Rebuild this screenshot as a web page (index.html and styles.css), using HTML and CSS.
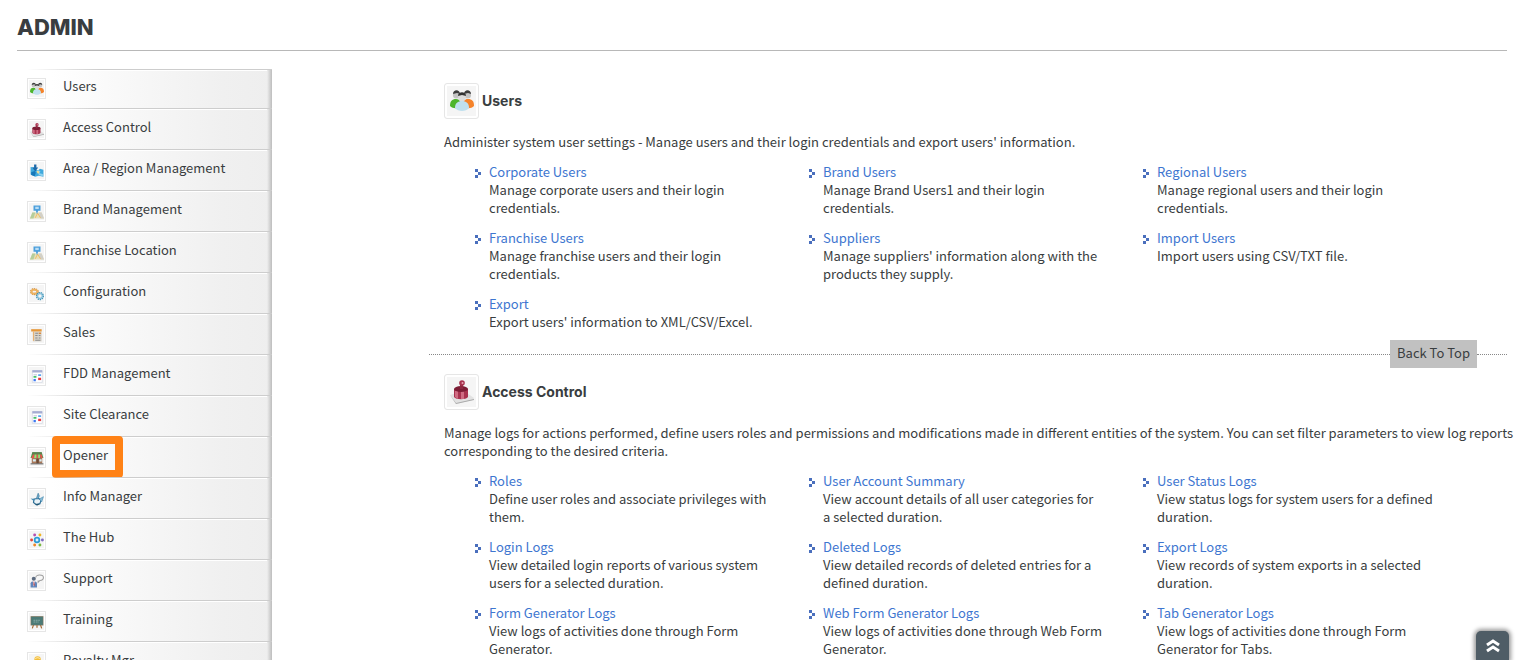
FILE: index.html
```html
<!DOCTYPE html>
<html lang="en">
<head>
    <meta charset="UTF-8">
    <meta name="viewport" content="width=device-width, initial-scale=1.0">
    <title>Admin</title>
    <link rel="stylesheet" href="styles.css">
</head>
<body>

    <!-- icon set -->
    <svg class="sprite" aria-hidden="true">
        <symbol id="i-users" viewBox="0 0 24 24">
            <path d="M0 17c0-5 2-7 6-7s5 3 5 7c-3 3-8 3-11 0z" fill="#4db52c"/>
            <path d="M13 17c0-5 1-7 5-7s6 2 6 7c-3 3-8 3-11 0z" fill="#f5832a"/>
            <circle cx="6.500" cy="6" r="3.600" fill="#c4c4c4"/>
            <path d="M3 5c0-5 7-5 7 0L7 4z" fill="#3d3d3d"/>
            <circle cx="17.500" cy="6" r="3.600" fill="#c4c4c4"/>
            <path d="M14 5c0-5 7-5 7 0l-3-1z" fill="#3d3d3d"/>
            <path d="M5 19c0-5 3-7 7-7s7 2 7 7c-3 4-11 4-14 0z" fill="#bfe0ee"/>
            <circle cx="12" cy="8.500" r="3.800" fill="#dcdcdc"/>
            <path d="M8 7c0-5 8-5 8 0l-4-1z" fill="#333"/>
        </symbol>
        <symbol id="i-access" viewBox="0 0 24 24">
            <path d="M0 15l14-4 10 7-1 2-17 4z" fill="#e2e2e2"/>
            <path d="M0 15l6 8 18-4v1L6 24z" fill="#aaa"/>
            <path d="M4 9v8c2 3 12 3 14 0V9z" fill="#a8334f"/>
            <path d="M5 11v6l3 2v-9zM11 11h3v8h-3z" fill="#cf6b82"/>
            <ellipse cx="11" cy="9" rx="7" ry="3" fill="#7c1d35"/>
            <path d="M10 9V4h3v5z" fill="#8d2840"/>
            <circle cx="12" cy="3" r="2.800" fill="#a8334f"/>
            <circle cx="12.500" cy="3" r="1" fill="#e7a6b4"/>
        </symbol>
        <symbol id="i-area" viewBox="0 0 24 24">
            <path d="M1 5l7 1 2 4 4 1 3-3 6 2v12l-8-2-6 2-8-4z" fill="#3fa9dd"/>
            <path d="M2 14l6-2 2 3-2 6-6-2z" fill="#1878b8"/>
            <path d="M14 11l4 1-2 4 6 1v4l-7-2z" fill="#8fd2ee"/>
            <path d="M11 13l3-2 2 3-2 3z" fill="#f3dd93"/>
            <path d="M7 1h4v5h3l-5 7-5-7h3z" fill="#1b68a8"/>
        </symbol>
        <symbol id="i-map" viewBox="0 0 24 24">
            <path d="M4 13h16l4 10H0z" fill="#e8dfb8"/>
            <path d="M4 13h5l-3 10H0z" fill="#b5cd9b"/>
            <path d="M15 13h5l4 10h-6z" fill="#d2d0c8"/>
            <path d="M9 22l4-8 5 8" fill="none" stroke="#f0b95a" stroke-width="1.500"/>
            <path d="M6 1h12v9h-4l-2 6-2-6H6z" fill="#4c9fdc"/>
            <path d="M9 3h6v4H9z" fill="#b9ddf5"/>
        </symbol>
        <symbol id="i-config" viewBox="0 0 24 24">
            <ellipse cx="7.500" cy="8" rx="5.500" ry="4" fill="none" stroke="#c98330" stroke-width="4" stroke-dasharray="2 1"/>
            <ellipse cx="7.500" cy="8" rx="5" ry="3.500" fill="none" stroke="#eeb25e" stroke-width="3"/>
            <ellipse cx="17" cy="15.500" rx="5" ry="5" fill="none" stroke="#3f94b8" stroke-width="4" stroke-dasharray="2 1"/>
            <circle cx="17" cy="15.500" r="4" fill="#f4f4f4" stroke="#8cc4dd" stroke-width="2"/>
        </symbol>
        <symbol id="i-sales" viewBox="0 0 24 24">
            <path d="M5 6h15v17H5z" fill="#d9d4ca"/>
            <path d="M2 2h18v4H2z" fill="#e6983a"/>
            <path d="M5 6h2v16H5z" fill="#e6b173"/>
            <path d="M9 9h5M9 13h4M15 13h3M9 17h4M15 17h3M9 21h9" stroke="#8b8b8b" stroke-width="1.800"/>
            <path d="M15 9h4" stroke="#d97b25" stroke-width="2"/>
        </symbol>
        <symbol id="i-form" viewBox="0 0 24 24">
            <path d="M4 3h17v20H4z" fill="#fff" stroke="#c9cede" stroke-width="1"/>
            <path d="M4 2h17v4H4z" fill="#a5acd2"/>
            <path d="M6 9h6v2H6z" fill="#c3c9dd"/>
            <path d="M6 12h5v3H6z" fill="#43c36a"/>
            <path d="M14 9h5v3h-5z" fill="#58a6f0"/>
            <path d="M6 17h4v4H6z" fill="#3c78f0"/>
            <path d="M14 15h5v4h-5z" fill="#e8353a"/>
        </symbol>
        <symbol id="i-store" viewBox="0 0 24 24">
            <path d="M3 12h18v10H3z" fill="#a9785a"/>
            <path d="M5 14h5v4H5zM16 14h4v4h-4z" fill="#d8ecf2"/>
            <path d="M11 13h4v9h-4z" fill="#6c4a35"/>
            <path d="M4 2h16l3 10H1z" fill="#3fa34c"/>
            <path d="M4 2h16l1 4H3z" fill="#5e7f4e"/>
            <path d="M5 6h3l-1 6H2zM11 6h3v6h-3zM17 6h3l2 6h-4z" fill="#e8524e"/>
            <path d="M8 6h3v6H7zM14 6h3v6h-3z" fill="#9cdb75"/>
            <path d="M1 21h22v2H1z" fill="#777"/>
        </symbol>
        <symbol id="i-info" viewBox="0 0 24 24">
            <path d="M7 12l8-1 4 3-2 6-6 2-5-4z" fill="#eaf3f8" stroke="#2f6f96" stroke-width="2"/>
            <path d="M11 11l3-9 2 5-2 4" fill="#6faccc" stroke="#2f6f96"/>
            <path d="M1 11l7 1-1 4z" fill="#3f88b2"/>
            <path d="M16 12l7-4-3 9z" fill="#8bbcd4" stroke="#3f88b2"/>
            <path d="M8 20h9l-4 3z" fill="#22546f"/>
        </symbol>
        <symbol id="i-hub" viewBox="0 0 24 24">
            <circle cx="12" cy="12" r="4" fill="#d9f0fb" stroke="#2d9bd6" stroke-width="3"/>
            <circle cx="8" cy="3.500" r="2.500" fill="#b550b0"/>
            <circle cx="17" cy="3.500" r="2.500" fill="#f0b323"/>
            <circle cx="2.700" cy="12" r="2.500" fill="#e0473e"/>
            <circle cx="21.300" cy="12" r="2.500" fill="#7d68c0"/>
            <circle cx="8" cy="20.500" r="2.500" fill="#f08626"/>
            <circle cx="17" cy="20.500" r="2.500" fill="#79b843"/>
        </symbol>
        <symbol id="i-support" viewBox="0 0 24 24">
            <path d="M10 6c0-6 13-5 13 0 0 4-3 5-6 5l-3 3v-3" fill="#f7f7f7" stroke="#9d9d9d" stroke-width="1.800"/>
            <circle cx="6.500" cy="8" r="3.500" fill="#5c6b80"/>
            <path d="M1 23v-7c0-5 11-5 11 0v7z" fill="#6186bb"/>
            <path d="M5 12h3l-1 9H6z" fill="#fff"/>
            <path d="M6 13h1l1 6-1 2-1-2z" fill="#c23838"/>
        </symbol>
        <symbol id="i-board" viewBox="0 0 24 24">
            <path d="M6 17l-2 6M18 17l2 6M12 17v5" stroke="#a5672f" stroke-width="2"/>
            <path d="M1 2h22v16H1z" fill="#8a7a62"/>
            <path d="M2 3h20v14H2z" fill="#4b7a76"/>
            <path d="M6 9h12M6 12h9" stroke="#9dbdb9" stroke-width="1.200" stroke-dasharray="3 1"/>
        </symbol>
        <symbol id="i-royalty" viewBox="0 0 24 24">
            <circle cx="13" cy="6" r="5.500" fill="#f4bd36"/>
            <path d="M9 5c2-3 6-3 8 0" fill="none" stroke="#fbe29a" stroke-width="2"/>
            <path d="M1 14l8-3 13 3-4 7H4z" fill="#e9a52c"/>
        </symbol>
    </svg>

    <div class="page" id="top">
        <h1>ADMIN</h1>

        <div class="columns">
            <ul class="side-menu">
                <li><a href="#users"><span class="icon"><svg><use href="#i-users"/></svg></span>Users</a></li>
                <li><a href="#access"><span class="icon"><svg><use href="#i-access"/></svg></span>Access Control</a></li>
                <li><a href="#"><span class="icon"><svg><use href="#i-area"/></svg></span>Area / Region Management</a></li>
                <li><a href="#"><span class="icon"><svg><use href="#i-map"/></svg></span>Brand Management</a></li>
                <li><a href="#"><span class="icon"><svg><use href="#i-map"/></svg></span>Franchise Location</a></li>
                <li><a href="#"><span class="icon"><svg><use href="#i-config"/></svg></span>Configuration</a></li>
                <li><a href="#"><span class="icon"><svg><use href="#i-sales"/></svg></span>Sales</a></li>
                <li><a href="#"><span class="icon"><svg><use href="#i-form"/></svg></span>FDD Management</a></li>
                <li><a href="#"><span class="icon"><svg><use href="#i-form"/></svg></span>Site Clearance</a></li>
                <li class="marked"><a href="#"><span class="icon"><svg><use href="#i-store"/></svg></span>Opener</a></li>
                <li><a href="#"><span class="icon"><svg><use href="#i-info"/></svg></span>Info Manager</a></li>
                <li><a href="#"><span class="icon"><svg><use href="#i-hub"/></svg></span>The Hub</a></li>
                <li><a href="#"><span class="icon"><svg><use href="#i-support"/></svg></span>Support</a></li>
                <li><a href="#"><span class="icon"><svg><use href="#i-board"/></svg></span>Training</a></li>
                <li><a href="#"><span class="icon"><svg><use href="#i-royalty"/></svg></span>Royalty Mgr.</a></li>
            </ul>

            <div class="content">
                <section id="users">
                    <h2><span class="icon big"><svg><use href="#i-users"/></svg></span>Users</h2>
                    <p class="intro">Administer system user settings - Manage users and their login credentials and export users' information.</p>
                    <ul class="links">
                        <li><a href="#">Corporate Users</a><p>Manage corporate users and their login credentials.</p></li>
                        <li><a href="#">Brand Users</a><p>Manage Brand Users1 and their login credentials.</p></li>
                        <li><a href="#">Regional Users</a><p>Manage regional users and their login credentials.</p></li>
                        <li><a href="#">Franchise Users</a><p>Manage franchise users and their login credentials.</p></li>
                        <li><a href="#">Suppliers</a><p>Manage suppliers' information along with the products they supply.</p></li>
                        <li><a href="#">Import Users</a><p>Import users using CSV/TXT file.</p></li>
                        <li><a href="#">Export</a><p>Export users' information to XML/CSV/Excel.</p></li>
                    </ul>
                </section>

                <div class="divider"><a href="#top">Back To Top</a></div>

                <section id="access">
                    <h2><span class="icon big"><svg><use href="#i-access"/></svg></span>Access Control</h2>
                    <p class="intro">Manage logs for actions performed, define users roles and permissions and modifications made in different entities of the system. You can set filter parameters to view log reports corresponding to the desired criteria.</p>
                    <ul class="links">
                        <li><a href="#">Roles</a><p>Define user roles and associate privileges with them.</p></li>
                        <li><a href="#">User Account Summary</a><p>View account details of all user categories for a selected duration.</p></li>
                        <li><a href="#">User Status Logs</a><p>View status logs for system users for a defined duration.</p></li>
                        <li><a href="#">Login Logs</a><p>View detailed login reports of various system users for a selected duration.</p></li>
                        <li><a href="#">Deleted Logs</a><p>View detailed records of deleted entries for a defined duration.</p></li>
                        <li><a href="#">Export Logs</a><p>View records of system exports in a selected duration.</p></li>
                        <li><a href="#">Form Generator Logs</a><p>View logs of activities done through Form Generator.</p></li>
                        <li><a href="#">Web Form Generator Logs</a><p>View logs of activities done through Web Form Generator.</p></li>
                        <li><a href="#">Tab Generator Logs</a><p>View logs of activities done through Form Generator for Tabs.</p></li>
                    </ul>
                </section>
            </div>
        </div>
    </div>

    <a class="scroll-top" href="#top" aria-label="Scroll to top">
        <svg width="16" height="16" viewBox="0 0 16 16"><path d="M2 7l6-4 6 4M2 13l6-4 6 4" fill="none" stroke="#fff" stroke-width="3"/></svg>
    </a>

</body>
</html>
```

FILE: styles.css
```css
body {
    margin: 0;
    background: #fff;
    color: #393d40;
    font-family: "Noto Sans CJK SC", "Noto Sans", sans-serif;
    font-size: 13px;
    line-height: 18px;
}

h1, h2, p, ul {
    margin: 0;
    padding: 0;
}

ul {
    list-style: none;
}

a {
    color: #3e76d0;
    text-decoration: none;
}

.sprite {
    display: none;
}

.page {
    padding: 14px 18px 0 17px;
}

h1 {
    font-family: Inter, sans-serif;
    font-size: 22px;
    font-weight: 800;
    line-height: 26px;
    padding-bottom: 10px;
    border-bottom: 1px solid #b8b8b8;
}

.columns {
    display: grid;
    grid-template-columns: 412px 1fr;
    align-items: start;
    padding-top: 18px;
}

/* left menu */
.side-menu {
    width: 245px;
    margin-left: 10px;
    background:
        linear-gradient(to left, #bdbdbd, rgba(222, 222, 222, 0)) right / 5px 100% no-repeat,
        linear-gradient(to right, #fff 10%, #f6f6f6 50%, #f0f0f0 80%, #eee);
}

.side-menu li {
    position: relative;
    height: 41px;
    background:
        linear-gradient(to right, rgba(205, 205, 205, 0), #cdcdcd 30%) 0 0 / 100% 1px no-repeat,
        linear-gradient(#fff, #fff) 0 1px / 240px 1px no-repeat;
}

.side-menu a {
    display: flex;
    gap: 17px;
    padding-top: 10px;
    color: #393d40;
}

.side-menu li:first-child {
    height: 39px;
}

.side-menu li:first-child a {
    padding-top: 8px;
}

.icon {
    display: flex;
    align-items: center;
    justify-content: center;
    box-sizing: border-box;
    width: 19px;
    height: 21px;
    margin-top: 1px;
    border: 1px solid #e6e6e6;
    background: #f5f5f5;
    box-shadow: inset 0 0 0 1px #fff;
}

.icon svg {
    width: 14px;
    height: 14px;
}

.marked::after {
    content: "";
    position: absolute;
    left: 25px;
    top: 0;
    width: 55px;
    height: 26px;
    border: 8px solid #ff8216;
    border-radius: 4px;
}

/* sections */
.content {
    padding-top: 14px;
}

section {
    padding: 0 31px 0 15px;
}

h2 {
    display: flex;
    align-items: center;
    gap: 3px;
    font-family: Inter, sans-serif;
    font-size: 14px;
    line-height: 36px;
}

h2 .icon.big {
    width: 35px;
    height: 36px;
    margin: 0;
    border-radius: 3px;
    box-shadow: inset 0 0 0 2px #fff;
}

.icon.big svg {
    width: 24px;
    height: 24px;
}

/* long intros run a little past the link columns */
.intro {
    margin: 14px -40px 12px 0;
}

.links {
    display: grid;
    grid-template-columns: repeat(3, 1fr);
    row-gap: 12px;
    padding-left: 30px;
}

.links li {
    position: relative;
    padding: 0 39px 0 15px;
}

.links li::before {
    content: "";
    position: absolute;
    left: 1px;
    top: 6px;
    width: 3px;
    height: 3px;
    background: #4a6fbd;
    box-shadow: 3px 3px #4a6fbd, 0 6px #4a6fbd;
}

.divider {
    display: flex;
    align-items: center;
    margin: 9px 0 6px;
}

.divider::before,
.divider::after {
    content: "";
    flex: 1;
    border-top: 1px dotted #888;
}

.divider::after {
    flex: 0 0 30px;
}

.divider a {
    padding: 4px 7px 6px;
    background: #c1c1c1;
    color: #393d40;
}

.scroll-top {
    position: fixed;
    right: 16px;
    bottom: 0;
    display: flex;
    justify-content: center;
    width: 33px;
    height: 22px;
    padding-top: 7px;
    background: #4f5d66;
    border-radius: 5px 5px 0 0;
    box-shadow: 0 0 4px 2px rgba(0, 0, 0, 0.4);
}
```
